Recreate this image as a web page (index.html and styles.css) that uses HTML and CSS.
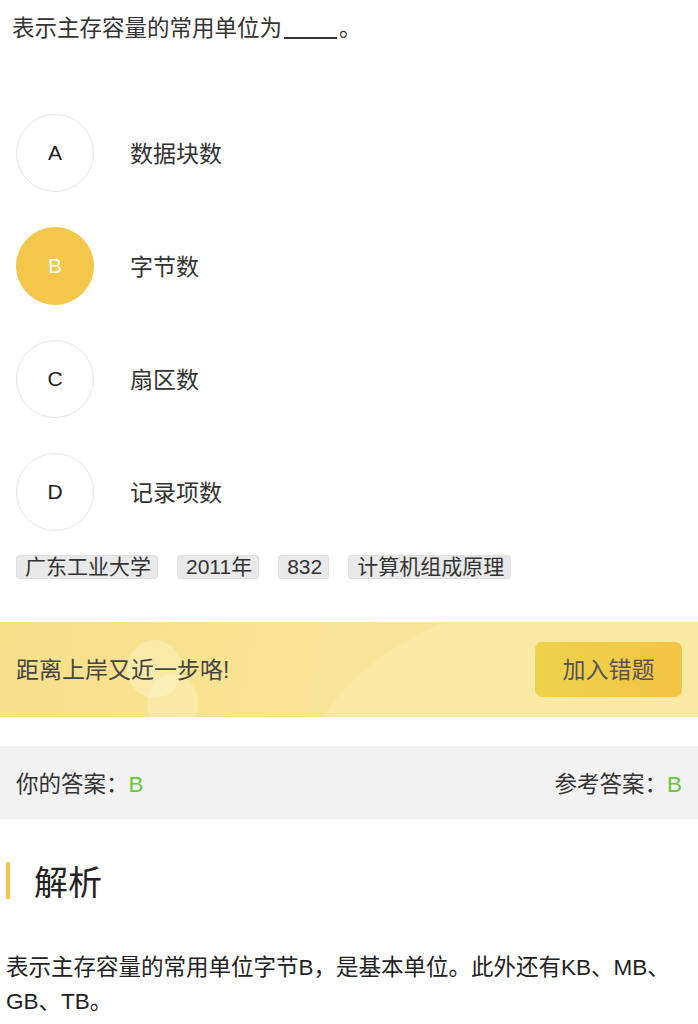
FILE: index.html
```html
<!DOCTYPE html>
<html lang="zh">
<head>
<meta charset="utf-8">
<link rel="stylesheet" href="styles.css">
</head>
<body>
<div class="page">
  <div class="question">表示主存容量的常用单位为<span class="blank"></span>。</div>
  <ul class="options">
    <li class="option"><span class="circle">A</span><span class="label">数据块数</span></li>
    <li class="option selected"><span class="circle">B</span><span class="label">字节数</span></li>
    <li class="option"><span class="circle">C</span><span class="label">扇区数</span></li>
    <li class="option"><span class="circle">D</span><span class="label">记录项数</span></li>
  </ul>
  <div class="tags">
    <span class="tag">广东工业大学</span>
    <span class="tag">2011年</span>
    <span class="tag">832</span>
    <span class="tag">计算机组成原理</span>
  </div>
  <div class="banner">
    <span class="bubble b1"></span>
    <span class="bubble b2"></span>
    <span class="banner-text">距离上岸又近一步咯!</span>
    <button class="add-btn">加入错题</button>
  </div>
  <div class="answers">
    <span>你的答案：<em class="ok">B</em></span>
    <span>参考答案：<em class="ok">B</em></span>
  </div>
  <h2 class="section-title">解析</h2>
  <p class="analysis">表示主存容量的常用单位字节B，是基本单位。此外还有KB、MB、GB、TB。</p>
</div>
</body>
</html>
```
FILE: styles.css
```css
html, body {
  margin: 0;
  padding: 0;
  background: #fff;
}
body {
  font-family: "Liberation Sans", "Noto Sans CJK SC", sans-serif;
  color: #333;
}
.page {
  width: 698px;
}
.question {
  padding: 13px 12px 0;
  font-size: 22.5px;
  line-height: 32px;
  color: #333;
}
.blank {
  display: inline-block;
  width: 53px;
  height: 0;
  border-bottom: 2px solid #333;
  margin: 0 2px 0 2px;
  vertical-align: -3px;
}
.options {
  list-style: none;
  margin: 69px 0 0;
  padding: 0 0 0 16px;
  display: flex;
  flex-direction: column;
  gap: 35px;
}
.option {
  display: flex;
  align-items: center;
  height: 78px;
}
.circle {
  box-sizing: border-box;
  width: 78px;
  height: 78px;
  border-radius: 50%;
  border: 1px solid #e6e6e6;
  display: flex;
  align-items: center;
  justify-content: center;
  font-size: 21px;
  color: #222;
}
.selected .circle {
  background: #f4c64a;
  border-color: #f4c64a;
  color: #fff;
}
.label {
  margin-left: 36px;
  margin-bottom: 3px;
  font-size: 23px;
  color: #333;
}
.tags {
  display: flex;
  gap: 19px;
  padding: 0 16px;
  margin-top: 24px;
}
.tag {
  background: #e9e9e9;
  border: 1px solid #e0e0e0;
  border-radius: 3px;
  height: 24px;
  box-sizing: border-box;
  padding: 0 6px 0 8px;
  font-size: 21px;
  line-height: 21px;
  color: #333;
}
.banner {
  position: relative;
  overflow: hidden;
  margin-top: 43px;
  height: 95px;
  display: flex;
  align-items: center;
  justify-content: space-between;
  padding: 0 16px;
  background: linear-gradient(100deg, #f7e08a 0%, #f8e494 45%, #f9e9a4 100%);
}
.banner::before {
  content: "";
  position: absolute;
  left: 300px;
  top: -40px;
  width: 700px;
  height: 420px;
  border-radius: 50%;
  background: #f9e9a5;
}
.bubble {
  position: absolute;
  border-radius: 50%;
  background: rgba(255, 250, 220, 0.35);
}
.b1 {
  left: 127px;
  top: 18px;
  width: 55px;
  height: 58px;
}
.b2 {
  left: 147px;
  top: 52px;
  width: 51px;
  height: 60px;
  background: rgba(255, 250, 220, 0.3);
}
.banner-text {
  position: relative;
  margin-bottom: 4px;
  font-size: 23px;
  color: #444;
}
.add-btn {
  position: relative;
  width: 147px;
  height: 55px;
  border: none;
  border-radius: 7px;
  background: linear-gradient(90deg, #eed34a 0%, #f2c443 100%);
  font-family: "Liberation Sans", "Noto Sans CJK SC", sans-serif;
  font-size: 23px;
  color: #555;
  padding: 0 0 4px;
}
.answers {
  margin-top: 29px;
  height: 73px;
  box-sizing: border-box;
  padding: 0 16px 2px;
  background: #f2f2f2;
  display: flex;
  align-items: center;
  justify-content: space-between;
  font-size: 22.5px;
  color: #333;
}
.ok {
  font-style: normal;
  color: #6cc63c;
}
.section-title {
  margin: 43px 0 0 6px;
  padding-left: 24px;
  border-left: 4px solid #f4c64a;
  height: 37px;
  line-height: 42px;
  font-size: 34px;
  font-weight: normal;
  color: #222;
}
.analysis {
  margin: 52px 0 0;
  padding: 0 6px;
  font-size: 22.5px;
  line-height: 34px;
  color: #222;
}
```
